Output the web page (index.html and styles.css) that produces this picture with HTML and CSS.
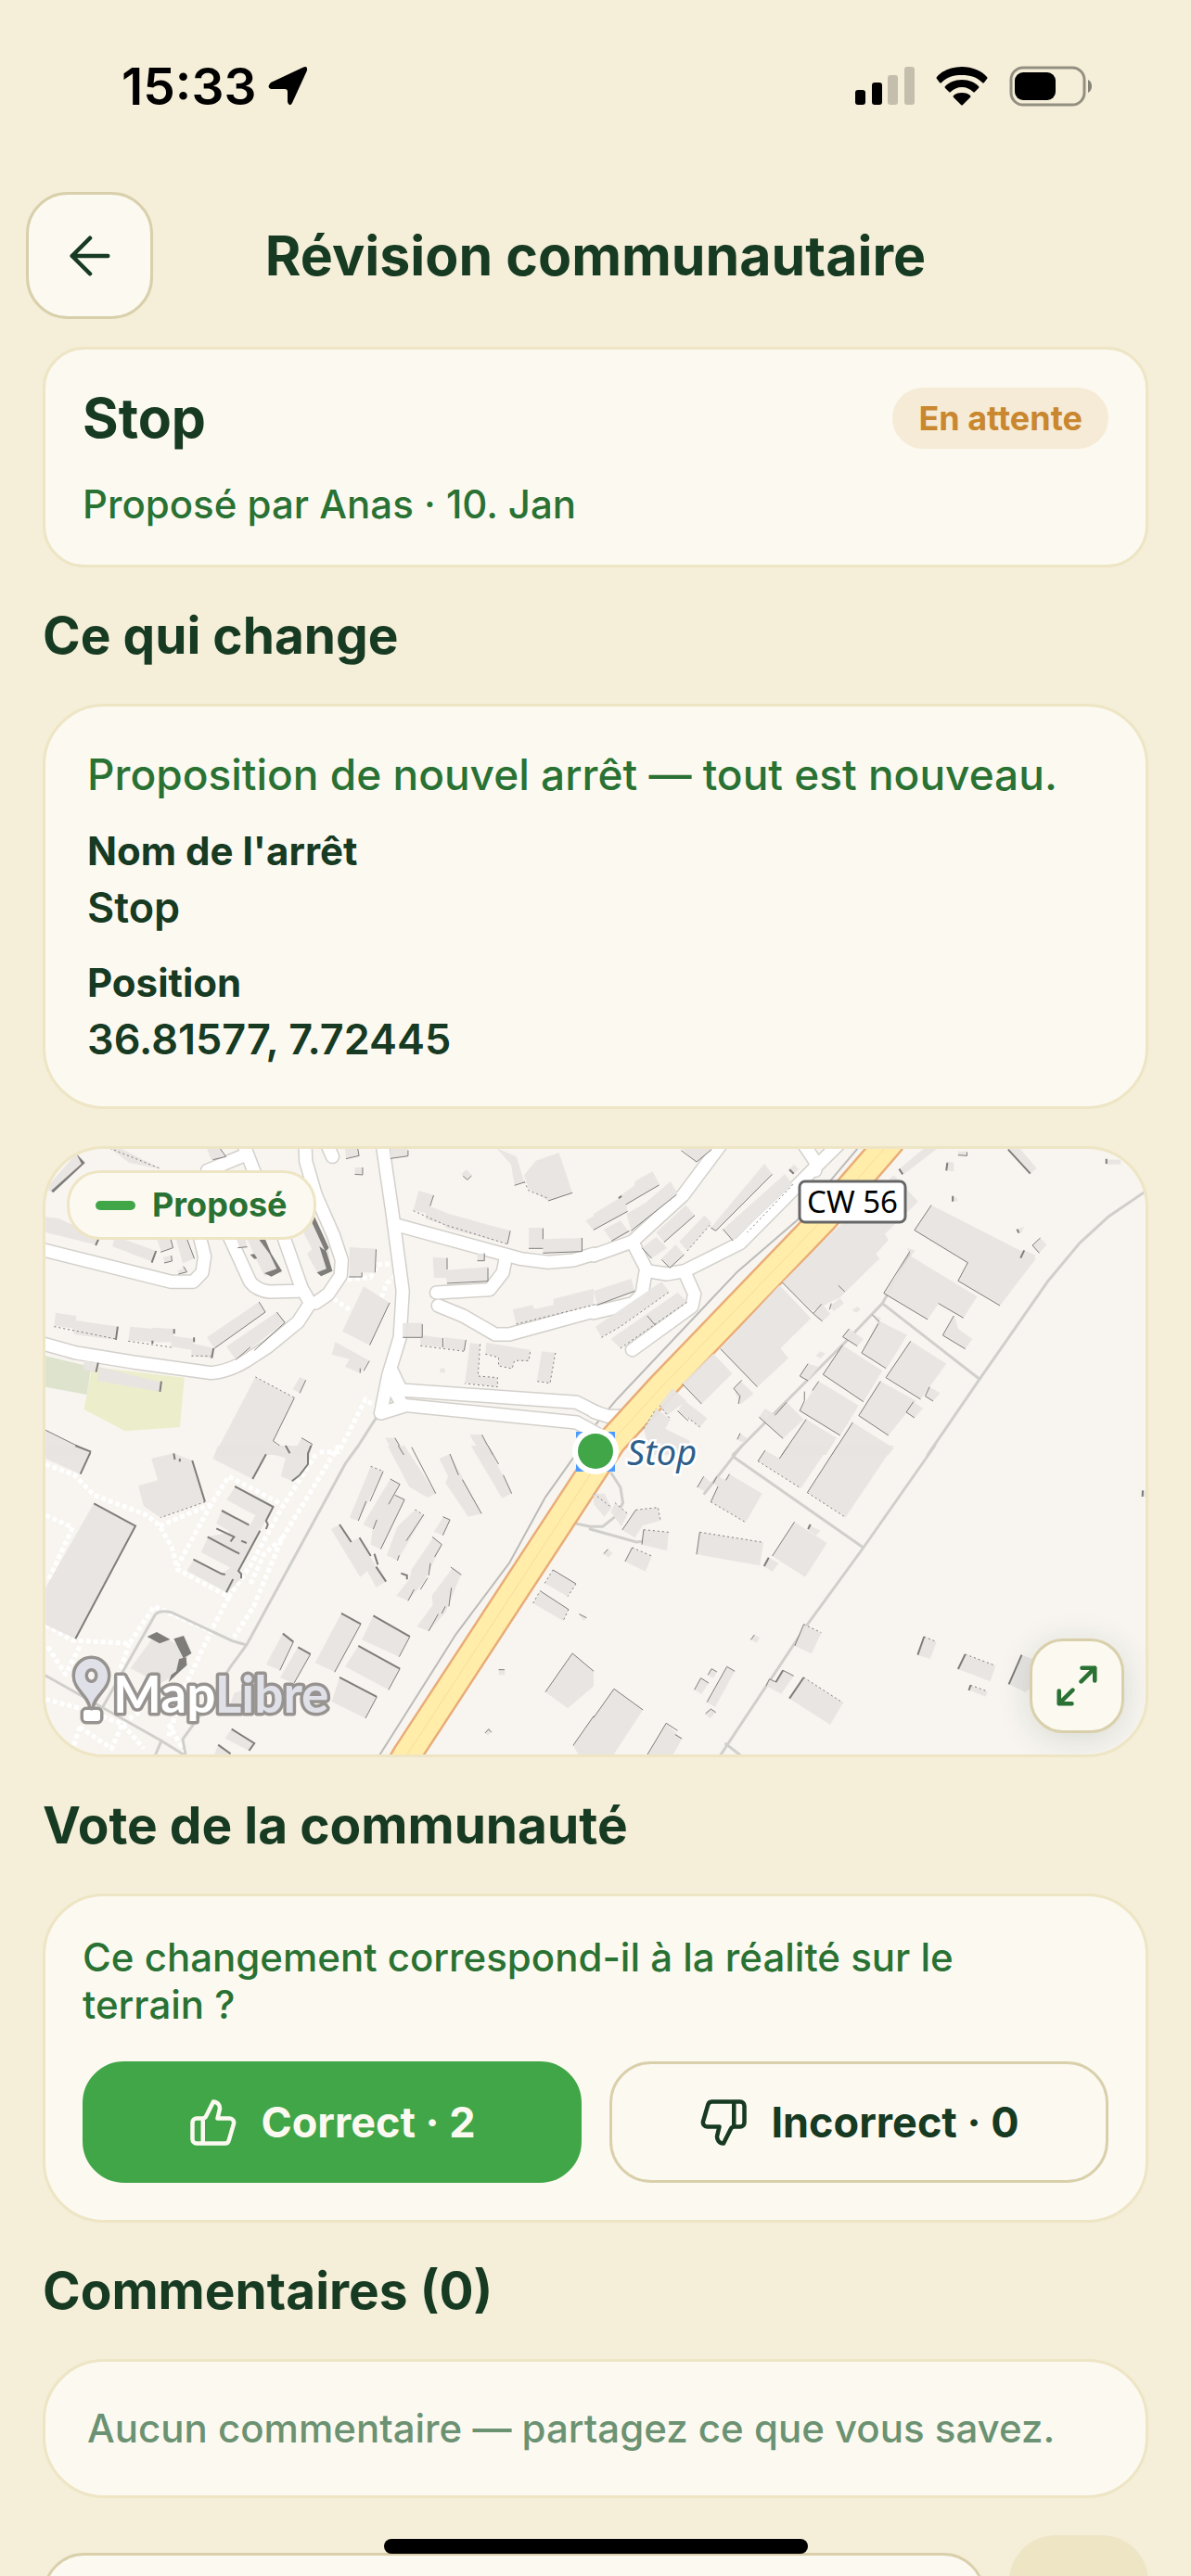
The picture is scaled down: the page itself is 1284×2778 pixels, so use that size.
FILE: index.html
```html
<!DOCTYPE html>
<html lang="fr">
<head>
    <meta charset="UTF-8">
    <meta name="viewport" content="width=device-width, initial-scale=1.0">
    <title>Révision communautaire</title>
    <link rel="stylesheet" href="styles.css">
</head>
<body>
    <div class="status-bar">
        <div class="status-time">
            <span>15:33</span>
            <svg width="44" height="44" viewBox="0 0 44 44"><path d="M38 2Q44 -1 43 5L27 40Q24 45 22 39V28Q22 25 19 25H4Q-1 23 4 18z"/></svg>
        </div>
        <div class="status-icons">
            <svg width="64" height="42" viewBox="0 0 64 42">
                <rect x="0" y="25" width="11" height="16" rx="3"/>
                <rect x="18" y="17" width="11" height="24" rx="3"/>
                <rect class="dim" x="35" y="9" width="11" height="32" rx="3"/>
                <rect class="dim" x="53" y="0" width="11" height="41" rx="3"/>
            </svg>
            <svg width="56" height="42" viewBox="0 0 56 42">
                <path d="M28 0C17 0 7 4 1 11Q0 12 1 13L4 17Q5 18 6 17C12 11 19 9 28 9S44 11 50 17Q51 18 52 17L55 13Q56 12 55 11C49 4 39 0 28 0z"/>
                <path d="M28 14C20 14 14 17 10 21Q9 22 10 23L14 27Q15 28 16 27C19 24 23 22 28 22S37 24 40 27Q41 28 42 27L46 23Q47 22 46 21C42 17 36 14 28 14z"/>
                <path d="M28 28C24 28 21 29 19 31Q18 32 19 33L27 41Q28 42 29 41L37 33Q38 32 37 31C35 29 32 28 28 28z"/>
            </svg>
            <svg width="90" height="44" viewBox="0 0 90 44">
                <rect class="battery-shell" x="2" y="2" width="79" height="40" rx="13"/>
                <rect x="6" y="7" width="44" height="30" rx="9"/>
                <path class="battery-tip" d="M85 15Q89 17 89 22T85 29z"/>
            </svg>
        </div>
    </div>

    <header class="header">
        <button class="back-btn" type="button" aria-label="Retour">
            <svg width="44" height="44" viewBox="0 0 48 48"><path d="M45 24H3M24 3L3 24l21 21"/></svg>
        </button>
        <h1>Révision communautaire</h1>
    </header>

    <main class="content">
        <section class="card summary">
            <div class="summary-top">
                <h2 class="summary-title">Stop</h2>
                <span class="badge">En attente</span>
            </div>
            <p class="note">Proposé par Anas · 10. Jan</p>
        </section>

        <h2 class="section-title">Ce qui change</h2>
        <section class="card card-round changes">
            <p class="changes-intro">Proposition de nouvel arrêt — tout est nouveau.</p>
            <dl class="fields">
                <div class="field">
                    <dt>Nom de l'arrêt</dt>
                    <dd>Stop</dd>
                </div>
                <div class="field">
                    <dt>Position</dt>
                    <dd>36.81577, 7.72445</dd>
                </div>
            </dl>
        </section>

        <section class="map-card">
            <svg class="map" viewBox="0 0 1186 653" preserveAspectRatio="xMidYMid slice" role="img" aria-label="Carte de l'arrêt">
                <defs>
                    <g id="streets">
                        <path transform="translate(-9 -10) scale(.3827 .3333)" d="M0 352L378 460H440L465 430L472 378L455 300L480 100L585 50M580 10L610 100L690 300L745 480L765 520M540 310L600 460Q620 488 655 492L735 490M755 10L757 70L785 180L835 310L858 390L855 440L820 500L785 528H770L735 590L650 670L590 715Q540 750 490 755L270 720L110 690L0 655M815 10L832 55M972 10L1000 230L1030 490L1022 640L990 760L968 885L1040 860L1520 915L1575 950M1000 750L1025 810L1520 850L1580 885M1005 810L1030 860M1010 275L1360 385L1440 397L1510 390L1568 370M1320 385L1312 430L1275 485L1125 495M1130 537L1200 570L1290 630H1330L1568 555"/>
                        <path transform="translate(591 -10) scale(.3852 .3333)" d="M360 10L250 180L108 330L0 375M108 330L150 425L205 435L255 425L410 335L560 160L620 90L690 10M585 10L620 70V100M145 430L135 500L110 530L0 560M255 430L282 500L275 540L108 680M0 880L40 895H80"/>
                    </g>
                    <g id="main-road">
                        <path d="M910 -7L839 75L664 257L611 315L588 350L390 653L377 675"/>
                    </g>
                </defs>
                <rect class="land" width="1186" height="653"/>

                <!-- parks -->
                <g transform="translate(-9 -10) scale(.3827 .3333)">
                    <path class="park" d="M24 700L152 735L140 825L24 800z"/>
                    <path class="grass" d="M155 735L415 770L402 930L248 943L132 873z"/>
                </g>

                <!-- footpaths -->
                <g class="footpath">
                    <path transform="translate(-9 -10) scale(.3827 .3333)" d="M875 452L940 445L960 405L1010 400M1010 440L985 465L970 510M835 515L880 550M960 870L925 840L850 1010H790"/>
                    <path transform="translate(-9 320) scale(.3827 .3333)" d="M24 60L105 95L160 160L310 225L345 260L380 330L395 400L540 490L600 390L690 200L790 20M24 225L100 265L30 440M345 260L490 190L540 100L690 190M490 190L395 390M850 0L690 300L610 520L555 620M690 300L640 350L600 450M24 580L100 630L260 640L330 520L490 600L420 770L370 940M260 640L220 770M540 490L490 600M120 650L80 740L30 650M24 820L120 850L240 900L300 980M120 910L210 980L240 900L290 860M120 910L95 1000M370 900L415 990"/>
                </g>

                <!-- tracks and minor roads -->
                <g class="minor">
                    <path transform="translate(591 -10) scale(.3852 .3333)" d="M1560 155L1440 250L1360 335L1270 460L1080 775L935 1020M808 530L1080 775M885 370L808 530L700 660L390 1020"/>
                    <path transform="translate(-9 320) scale(.3827 .3333)" d="M955 -90L905 0L870 55L590 645L545 715L480 840L410 950L420 1010M590 645L550 632L380 540Q345 530 332 548L185 845M10 735L350 955L420 1005M350 955L330 1010"/>
                    <path transform="translate(591 320) scale(.3852 .3333)" d="M955 0L755 330L585 600L350 1010M390 35L755 330M415 0L310 155M370 965L420 1010M50 90L75 135L82 185L60 230L25 262H-10L-60 250M-10 270L120 312L160 307"/>
                </g>
                <g class="rail">
                    <path transform="translate(591 -10) scale(.3852 .3333)" d="M745 20L570 260L400 430L65 840L0 930"/>
                    <path transform="translate(-9 320) scale(.3827 .3333)" d="M1510 40L1430 170L1330 380L1180 610L960 1010"/>
                </g>

                <use class="street-casing" href="#streets"/>
                <use class="street-fill" href="#streets"/>
                <use class="road-casing" href="#main-road"/>
                <use class="road-fill" href="#main-road"/>
                <use class="road-center" href="#main-road"/>

                <!-- buildings, north-west -->
                <g transform="translate(-9 -10) scale(.3827 .3333)">
                    <path class="building" d="M24 160L110 45L135 75L45 172zM205 28H235L350 95L260 75zM478 28H515L532 55L490 65zM24 250L60 255L175 315L165 340L24 300zM220 312L335 360L325 395L212 345zM335 315H375L383 350L350 362zM390 315H420L443 385L410 400zM355 380L378 375L380 395L360 400zM395 425L418 412L422 430L405 437zM560 315H585L592 348L570 350zM590 315H625L690 430L640 440L610 370zM770 260L820 350L830 425L790 430L760 370L775 355L750 300zM880 348L955 353L952 430H915V445H880zM920 475L993 528L937 665L860 620zM840 655L935 715L910 755L868 735L880 710L830 695zM52 560L110 570V585L230 605L222 648L105 630L100 610L48 603zM262 605L325 612V608L388 613L383 635L443 645L440 660L498 675L492 707L435 698V680L378 670V655H322L257 650zM625 525L643 558L500 675L478 640zM675 558L698 590L560 712L533 670zM175 735L350 785L345 815L170 780zM132 715L172 722L165 752L130 745zM615 768L725 835L665 975L700 1020H500zM740 768L757 778L740 820L720 808zM1075 165L1117 180L1105 215L1160 240L1270 275L1333 295L1325 338L1150 285L1148 275L1095 258V238L1060 228zM1385 285H1425V322L1535 318V362L1425 367V352H1385zM1115 380L1155 383V422L1270 412V458L1155 465L1152 447H1118zM1240 368h22v24h-22zM1295 28L1350 55L1372 135L1345 148L1335 80zM1405 68L1470 42L1508 172L1440 198L1385 160L1372 115zM868 28H903L907 52L870 62zM895 90h22v22h-22zM995 28H1045V53L995 61zM1195 112L1209 97L1224 115L1212 130zM1545 262L1568 248V295zM1030 593H1085V640H1030zM1080 632L1143 642V672L1080 665zM1148 640L1208 648L1203 683L1145 675zM1220 657L1248 662L1242 765L1297 770V800L1205 787zM1265 657L1390 680L1385 718L1345 713L1338 740L1300 730V705L1263 692zM1422 685L1460 690L1445 788L1408 780zM1340 550L1395 535L1402 548L1455 535V515L1568 482V535L1465 565L1350 597zM1135 740h14v14h-14zM24 940L150 1010V1020H24zM745 965L775 985L760 1020H720zM1218 955H1253L1283 1020H1253zM980 965H1008L1036 1020H1010z"/>
                    <path class="shade-solid" d="M110 45L135 75L45 172L40 165L125 78zM620 315H640L660 370L690 425L660 443L640 432L675 418L655 370zM780 245L822 350L812 362L775 270zM795 345L815 362L832 425L800 442L788 430L815 418zM600 372L612 370L620 384L612 386z"/>
                    <path class="shade-heavy" d="M175 317L165 342M335 360L323 398M227 605L222 648M497 675L492 707M350 782L346 816M172 722L166 752M386 613V628M442 640V655M325 650V660"/>
                    <path class="shade" d="M515 28L532 55L495 65M375 315L383 350L348 364M420 315L443 385M378 375L380 393L358 399M412 410L422 428L398 435M592 347L565 350M955 355L952 430M878 444H915V430M993 528L937 665M936 716L920 748M910 740V755M625 525L643 558L500 675M675 558L698 592L612 682M600 672L560 712M725 835L665 975L695 1000M757 778L740 820M903 28L907 52L870 62M917 90V114L895 112M1045 35V53L995 61M1224 117L1212 130L1200 118M1117 180L1107 215M1333 295L1325 338M1425 287V322M1535 318V362L1425 367M1425 352H1385M1155 383V420M1270 415V458L1155 465M1260 368V392H1240M1085 597V640H1030M1143 642V672M1208 648L1203 683M1345 148L1372 138M1508 172L1440 198M24 940L150 1012M745 965L775 985L760 1020M1253 955L1283 1020M1008 965L1036 1020"/>
                    <path class="shade-dots" d="M205 28L350 95M48 605L222 645M257 652L378 672M435 700H490M615 768L725 835M1060 230L1148 275L1325 338M1080 667L1205 685M1248 662L1242 765L1297 770V800L1205 789M1263 694L1300 705V732L1338 741L1345 715H1385L1390 680M1460 690L1445 788L1408 782M1350 597L1568 535M1372 135L1385 165L1440 190"/>
                </g>

                <!-- buildings, north-east -->
                <g transform="translate(591 -10) scale(.3852 .3333)">
                    <path class="building" d="M0 240L85 180L95 232L0 292zM70 185L115 148V135L165 103L185 147L90 210zM92 240L145 205L215 135L235 175L105 295zM28 290L75 262L100 300L50 328zM245 28H335L288 72zM478 78L500 112L342 295L328 285zM535 112L558 145L390 327L362 290zM175 300L258 212L283 245L197 332zM135 350L175 315L205 350L162 384zM310 245L330 270L262 360L240 330zM190 385L230 340L253 372L213 415zM0 490L105 450L115 490L10 535zM5 605L190 460L212 492L75 605L22 640zM48 645L235 495L262 525L75 675zM545 100L560 80L575 95L558 112zM700 265L840 115L908 200L815 305L825 325L790 370L800 385L690 510L610 555L528 462zM520 470L608 578L523 675L545 707L458 800L355 677zM335 692L388 757L302 855L248 790zM220 805L260 845L205 892L183 860zM255 845L318 902L297 930L235 878zM175 870L215 905L200 935L270 975L255 1020H160L140 935zM855 95L925 28H963L868 112zM945 212L1238 385L1137 537L1020 457L1047 398L898 293zM885 375L1073 508L1035 577L965 530L935 582L812 497zM877 352L900 358L888 378zM1010 570L1020 612L1060 645L1040 677L977 633zM1205 358L1238 375L1215 405L1193 385zM1228 342L1250 318L1268 340L1247 367zM1160 28H1192L1240 92L1222 110zM1435 65H1475V80H1435zM1020 38H1045V52H1020zM988 70L1008 75V103L987 100zM1005 182L1018 190V200L1005 198zM1185 290L1205 282L1195 305zM797 585L877 632L820 740L750 690zM780 565L805 578L795 592zM887 652L987 725L915 840L820 768zM697 665L808 748L755 848L642 760zM803 782L903 845L825 957L742 893zM630 782L742 860L690 957L577 877zM540 850L588 905L530 967L463 898L480 870L510 892zM595 905L680 965L650 1020H527zM725 915L840 998L825 1020H667zM895 848L922 870L898 900L875 882zM940 800L970 820L950 846L928 830zM715 612L755 645L738 668L697 638zM600 725L630 735L600 780L577 765zM410 780L448 822L410 857L392 805zM640 530L662 565L640 588L615 565zM690 512L700 530L672 555L660 540zM738 540L747 550L735 560L723 552zM635 685L648 692L635 708L622 700zM410 950L428 965L420 982L402 970z"/>
                    <path class="shade-heavy" d="M855 95L865 112M1160 32L1222 110M1435 62V78M990 75L987 100M1205 358L1195 383M1185 290L1190 302M1005 182V200M548 97L560 110M78 182L70 190"/>
                    <path class="shade" d="M0 292L95 232M183 147L90 210M232 178L105 295M100 295L50 328M245 35L288 72L330 32M500 112L342 295L328 285M390 327L362 290M283 245L197 332M162 384L135 350M253 372L213 415L190 388M115 490L10 535M150 570L172 600M528 462L610 558L640 588M355 677L458 800M248 790L302 855M235 878L265 910M945 212L898 293L1047 398L1020 457L1137 537M885 362L812 497L935 582M965 530L1035 577M1008 570L977 633L1040 677M1250 318L1228 342L1247 367M797 595L750 690L818 740M780 567L800 590M887 652L818 770L915 840M697 665L642 760L755 848M803 782L742 893L825 957M630 782L612 812M590 815V845L577 877L690 957M540 850L508 892M463 898L530 967M595 905L527 1020M725 915L667 1020M895 848L875 882L898 900M940 800L928 830L950 846M715 612L697 638L738 668M600 725L577 765L600 780M415 778L392 805L410 830L405 855M665 530L660 550M685 472L703 492M638 532L615 562M1045 40V52L1020 50M410 950L402 970"/>
                    <path class="shade-dots" d="M262 360L330 270M22 640L75 605L212 492M75 675L262 525M297 930L265 900M185 860L215 905M140 935L175 870M558 145L430 300"/>
                </g>

                <!-- buildings, south-west -->
                <g transform="translate(-9 320) scale(.3827 .3333)">
                    <path class="building" d="M24 0H108L152 22L122 92L24 42zM322 42L385 25L437 48L473 182L348 233L300 195L285 130L340 112zM510 0H640L648 25L607 108L495 42zM655 0H772L765 60L718 115L687 98L700 40L660 28zM160 187L277 260L108 625L24 580V460zM560 132L665 198L628 275L570 405L575 430L535 475L422 405L442 368L520 415L545 395L462 345L482 295L545 280L505 252L520 210L600 258L615 225L533 175zM335 608L433 665L400 735L345 770L263 720zM940 67L975 83L905 243L880 233zM995 108L1022 125L1005 160L1035 175L968 335L940 320L945 270L918 255zM1065 207L1090 225L1015 372L985 355L1015 262zM1145 230L1163 240L1143 290L1118 278zM1118 295L1140 320L1090 440L1045 502L1012 485L1050 430L1055 400zM1172 393L1195 415L1150 540L1103 600L1070 585L1115 515L1112 485zM852 255L828 270L910 425L930 405L955 458L983 440L905 300L885 310zM987 0H1035L1123 155L1100 168L1048 133zM1163 27L1133 42L1158 100L1150 120L1215 230L1252 220zM1222 0H1270L1337 155L1310 170zM857 543L912 577L840 733L783 703zM947 550L1050 618L1020 683L915 628zM905 648L1022 722L990 790L868 715zM852 750L957 813L925 882L830 828zM692 608L722 635L685 727L645 708zM735 652L770 675L723 770L685 750zM548 915L612 963L597 987L530 947zM510 968L545 998H500zM1453 402L1518 447L1495 488L1430 445zM1417 470L1497 530L1482 567L1397 510zM1508 672L1568 730V778L1495 850L1432 797zM1568 875V1010H1530L1510 970zM1527 545L1548 557L1540 567zM1302 722L1318 728V742H1300zM1272 915L1280 925L1270 938L1262 928zM585 790L600 820L540 850L555 800z"/>
                    <path class="shade-solid" d="M310 618L337 603L375 627L345 640zM385 625L413 615L435 672L412 688zM400 690L420 685L422 710L398 735L370 766L378 742L392 730z"/>
                    <path class="shade-heavy" d="M150 22L122 92M385 25L388 45M402 42V52M437 48L473 182M645 28L607 108M160 187L277 260L108 625M557 132L665 198L645 243L650 255L645 270M520 210L597 257M505 268L555 295L545 310M480 295L570 350M628 275L567 405L575 415V430M440 368L520 415L530 417M552 432L533 475M548 917L612 963L597 987M510 968L545 997M857 543L912 577M947 550L1050 618M905 648L1022 722M852 750L957 813M692 608L722 635M735 652L770 675M772 0L763 25V60L740 95L718 115M852 255L885 312M908 298L940 357M950 350L960 385M955 392L983 440M1025 413L1042 420V433M108 0L152 20M700 0L712 25M575 308L590 315"/>
                    <path class="shade" d="M912 577L838 733M1050 618L1020 683M1022 722L990 790M957 813L925 882M722 635L684 727M770 675L723 770M975 83L938 180M927 180L905 243M995 108L1022 125L990 190M1008 160L1035 175L968 335M957 240L947 270M1088 225L1040 308M1020 355L1015 372M1143 230L1163 240L1143 290M1113 295L1140 320L1120 360M1108 380L1103 420M1100 428L1080 465M1062 465L1045 502M1165 393L1195 418M1167 460L1160 520M1150 520L1140 543M1130 545L1103 600M1017 0L1033 30M1055 5L1123 155M1163 27L1187 95M1198 110L1252 220M1270 0L1300 60M1313 95L1337 155M1453 402L1518 447M1417 470L1497 530M1508 672L1432 797M1508 672L1568 730M1568 875L1510 970M1527 545L1548 557M1300 725H1317M1262 930L1272 917L1280 928"/>
                    <path class="shade-dots" d="M473 182L348 233M940 67L975 83M1065 207L1090 225M1518 447L1495 488M1497 530L1482 567M1430 445L1453 402M1397 510L1417 470"/>
                </g>

                <!-- buildings, south-east -->
                <g transform="translate(591 320) scale(.3852 .3333)">
                    <path class="building" d="M480 15L520 42L545 0H660L580 138L460 50zM683 0H840L705 232L598 152zM380 92L472 155L425 248L328 182L348 132L335 122L348 100L370 112zM310 100L328 120L310 148L290 135zM562 247L653 315L592 425L500 357zM600 255L635 275L622 290L600 272zM490 362L518 380L500 408L477 390zM297 280L475 313L465 388L288 352zM118 208L180 200L187 242L138 258L115 298L80 273zM140 272L210 280L205 340L135 320zM108 330L163 357L145 407L88 375zM0 155L30 155L50 200L30 230L0 190zM60 185L95 220L78 262L48 215zM40 335L53 348L42 362L28 350zM588 578L637 605L610 673L563 648zM450 612L465 622L457 638L440 628zM373 715L395 730L340 845L317 830zM330 722L345 732L335 752L320 742zM300 752L322 768L302 803L282 790zM328 852L342 863L325 883L313 867zM530 727L560 745L525 803L483 777L492 752L512 765zM588 750L698 832L662 903L548 818zM57 787L138 855L50 1010H0V880zM203 898L247 948L218 1010H145zM927 618L960 635L942 690L907 678zM1040 675L1125 712L1110 763L1020 723zM1055 775L1102 795L1097 812L1050 790zM1198 677L1228 690V780L1208 797L1162 772zM1533 145H1545V165H1533z"/>
                    <path class="shade-heavy" d="M925 618L907 677M1040 675L1020 723M1055 775L1050 792M1198 677L1162 772M588 750L548 818M607 255L600 270M490 362L477 390M1537 145L1536 165M1545 885L1525 945M510 765L530 727"/>
                    <path class="shade" d="M480 15L460 50M545 0L520 42M683 0L598 152M380 92L370 112M348 132L328 182M308 100L290 135M345 100L335 122M562 247L500 357M297 280L288 352M118 208L80 273M140 272L135 320M108 330L88 375M40 335L28 350M588 578L563 648M450 612L440 628M395 730L373 715L317 830M345 732L330 722L320 742M322 768L300 752L282 790M342 863L328 852L313 867M530 727L560 745M483 777L492 755L510 765M57 787L138 855M57 787L0 880M203 898L145 1010M203 898L235 922M228 935L247 948"/>
                    <path class="shade-dots" d="M460 50L580 138M598 152L705 232M328 182L425 248M297 280L475 313M118 208L180 200L187 242M140 272L210 280M108 330L163 357M588 578L637 605M588 750L698 832M925 618L960 635M1040 675L1125 712M1055 775L1102 795M0 155L50 200M60 185L95 220"/>
                </g>

                <!-- road shield -->
                <rect class="shield" x="813" y="35" width="114" height="44" rx="6"/>
                <text class="shield-text" x="870" y="69">CW 56</text>

                <!-- stop marker -->
                <rect class="stop-box" x="572" y="305" width="42" height="43"/>
                <circle class="stop-ring" cx="593" cy="326" r="25"/>
                <circle class="stop-dot" cx="593" cy="326" r="19"/>
                <text class="stop-label" x="627" y="341">Stop</text>

                <!-- map attribution -->
                <g class="brand-pin">
                    <rect x="41" y="605" width="18" height="12" rx="3"/>
                    <path fill-rule="evenodd" d="M49.500 602C47 588 32 582 32 568a17.500 18 0 0 1 35 0C67 582 52 588 49.500 602zM49.500 560a7 8 0 1 0 .1 0z"/>
                </g>
                <text class="brand" x="73" y="608">Map<tspan class="brand-end">Libre</tspan></text>
            </svg>
            <span class="legend"><span class="legend-line"></span>Proposé</span>
            <button class="expand-btn" type="button" aria-label="Agrandir la carte">
                <svg width="44" height="44" viewBox="0 0 48 48"><path d="M30 3h15v15M45 3L29 19M18 45H3V30M3 45l16-16"/></svg>
            </button>
        </section>

        <h2 class="section-title">Vote de la communauté</h2>
        <section class="card card-round vote">
            <p class="note">Ce changement correspond-il à la réalité sur le terrain&nbsp;?</p>
            <div class="vote-actions">
                <button class="vote-btn vote-yes" type="button">
                    <svg width="54" height="54" viewBox="0 0 24 24"><path d="M7 10v12M15 5.880L14 10h5.830a2 2 0 0 1 1.920 2.560l-2.330 8A2 2 0 0 1 17.500 22H4a2 2 0 0 1-2-2v-8a2 2 0 0 1 2-2h2.760a2 2 0 0 0 1.790-1.110L12 2a3.130 3.130 0 0 1 3 3.880z"/></svg>
                    Correct · 2
                </button>
                <button class="vote-btn vote-no" type="button">
                    <svg width="54" height="54" viewBox="0 0 24 24"><path d="M17 14V2M9 18.120L10 14H4.170a2 2 0 0 1-1.920-2.560l2.330-8A2 2 0 0 1 6.500 2H20a2 2 0 0 1 2 2v8a2 2 0 0 1-2 2h-2.760a2 2 0 0 0-1.790 1.110L12 22a3.130 3.130 0 0 1-3-3.880z"/></svg>
                    Incorrect · 0
                </button>
            </div>
        </section>

        <h2 class="section-title">Commentaires (0)</h2>
        <section class="card card-round empty">
            <p>Aucun commentaire — partagez ce que vous savez.</p>
        </section>

        <form class="composer">
            <input class="composer-input" type="text" aria-label="Votre commentaire">
            <button class="composer-send" type="button" aria-label="Envoyer"></button>
        </form>
    </main>

    <div class="home-indicator"></div>
</body>
</html>
```
FILE: styles.css
```css
* {
    margin: 0;
    padding: 0;
    box-sizing: border-box;
}

body {
    height: 100vh;
    overflow: hidden;
    font-family: Inter, "Liberation Sans", sans-serif;
    font-size: 42px;
    font-weight: 500;
    line-height: 51px;
    background: #f5eed8;
    color: #163a22;
}

button,
input {
    font-family: inherit;
    color: inherit;
}

/* Status bar */
.status-bar {
    display: flex;
    align-items: center;
    justify-content: space-between;
    height: 207px;
    padding: 0 106px 21px 131px;
}

.status-time {
    display: flex;
    align-items: center;
    gap: 12px;
    font-size: 55px;
    font-weight: 600;
    color: #000;
}

.status-icons {
    display: flex;
    align-items: center;
    gap: 23px;
}

.dim {
    opacity: 0.2;
}

.battery-shell {
    fill: none;
    stroke: #000;
    stroke-width: 3;
    opacity: 0.4;
}

.battery-tip {
    opacity: 0.45;
}

/* Header */
.header {
    display: grid;
    grid-template-columns: 137px 1fr 137px;
    align-items: center;
    padding: 0 28px;
}

.back-btn {
    display: flex;
    align-items: center;
    justify-content: center;
    height: 137px;
    background: #fcf9f1;
    border: 3px solid #d9d0ab;
    border-radius: 45px;
}

.back-btn path,
.expand-btn path {
    fill: none;
    stroke: currentColor;
    stroke-width: 5;
    stroke-linecap: round;
    stroke-linejoin: round;
}

h1 {
    font-size: 59px;
    font-weight: 700;
    line-height: 67px;
    text-align: center;
}

/* Content */
.content {
    display: flex;
    flex-direction: column;
    gap: 40px;
    padding: 30px 46px 0;
}

.section-title,
.summary-title {
    font-size: 55px;
    font-weight: 700;
    line-height: 67px;
}

.card {
    display: flex;
    flex-direction: column;
    padding: 40px;
    background: #fcf9f1;
    border: 3px solid #eee5c5;
    border-radius: 45px;
}

.card-round {
    border-radius: 66px;
}

.note {
    color: #297233;
}

.summary {
    gap: 34px;
}

.summary-top {
    display: flex;
    align-items: center;
    justify-content: space-between;
}

.summary-title {
    font-size: 59px;
}

.badge {
    padding: 8px 28px;
    font-size: 36px;
    font-weight: 700;
    line-height: 50px;
    color: #c9872f;
    background: #f6ebd6;
    border-radius: 33px;
}

.changes {
    gap: 28px;
    padding: 45px;
}

.changes-intro {
    font-size: 46px;
    line-height: 57px;
    color: #297233;
}

.fields {
    display: flex;
    flex-direction: column;
    gap: 28px;
}

.field {
    display: flex;
    flex-direction: column;
    gap: 9px;
}

.field dt {
    font-weight: 700;
}

.field dd {
    font-size: 45px;
    font-weight: 600;
    line-height: 54px;
}

/* Map */
.map-card {
    position: relative;
    overflow: hidden;
    border: 3px solid #eee5c5;
    border-radius: 66px;
}

.map {
    display: block;
    width: 100%;
}

.map path {
    vector-effect: non-scaling-stroke;
}

.land {
    fill: #f8f5f0;
}

.park {
    fill: #dde3cd;
}

.grass {
    fill: #ecedcb;
}

.building {
    fill: #e7e4e1;
    fill-opacity: 0.95;
}

.shade,
.shade-heavy,
.shade-dots {
    fill: none;
    stroke: #7f7d7a;
    stroke-width: 1;
}

.shade-heavy {
    stroke-width: 2;
}

.shade-dots {
    stroke-dasharray: 2 3;
}

.shade-solid {
    fill: #7f7d7a;
}

.footpath,
.minor,
.rail,
.street-casing,
.street-fill,
.road-casing,
.road-fill,
.road-center {
    fill: none;
    stroke-linecap: round;
    stroke-linejoin: round;
}

.footpath {
    stroke: #fff;
    stroke-width: 5;
    stroke-linecap: butt;
    stroke-dasharray: 5 3;
}

.minor {
    stroke: #d0cfcc;
    stroke-width: 3;
}

.rail {
    stroke: #bcbbb9;
    stroke-width: 2;
}

.street-casing {
    stroke: #d3d0cb;
    stroke-width: 16;
}

.street-fill {
    stroke: #fff;
    stroke-width: 13;
}

.road-casing {
    stroke: #e9ac77;
    stroke-width: 33;
}

.road-fill {
    stroke: #ffeda9;
    stroke-width: 28;
}

.road-center {
    stroke: #f8dc9c;
    stroke-width: 1;
}

.shield {
    fill: #fff;
    stroke: #666;
    stroke-width: 3;
}

.shield-text {
    font-family: "Noto Sans", sans-serif;
    font-size: 33px;
    font-weight: 400;
    text-anchor: middle;
}

.stop-box {
    fill: #4d9bff;
}

.stop-ring {
    fill: #fff;
}

.stop-dot {
    fill: #41a648;
}

.stop-label {
    font-family: "Noto Sans", sans-serif;
    font-size: 38px;
    font-style: italic;
    font-weight: 400;
    fill: #2e5f8a;
    stroke: #fff;
    stroke-width: 5;
    paint-order: stroke;
}

.brand,
.brand-pin {
    fill: #fff;
    stroke: #979390;
    stroke-width: 7;
    stroke-linejoin: round;
    paint-order: stroke;
}

.brand {
    font-family: Lato, sans-serif;
    font-size: 55px;
    font-weight: 700;
}

.brand-end,
.brand-pin path {
    fill: #e0e1e8;
}

.legend {
    position: absolute;
    top: 23px;
    left: 23px;
    display: flex;
    align-items: center;
    gap: 18px;
    padding: 9px 28px;
    font-size: 36px;
    font-weight: 700;
    color: #297233;
    background: #fcf9f1;
    border: 3px solid #eee5c5;
    border-radius: 36px;
}

.legend-line {
    width: 43px;
    height: 10px;
    background: #41a648;
    border-radius: 5px;
}

.expand-btn {
    position: absolute;
    right: 23px;
    bottom: 23px;
    display: flex;
    align-items: center;
    justify-content: center;
    width: 102px;
    height: 102px;
    color: #297233;
    background: #fcf9f1;
    border: 3px solid #d9d0ab;
    border-radius: 36px;
    box-shadow: 0 6px 36px rgba(22, 58, 34, 0.14);
}

/* Vote */
.vote {
    gap: 36px;
}

.vote-actions {
    display: grid;
    grid-template-columns: 1fr 1fr;
    gap: 30px;
}

.vote-btn {
    display: flex;
    align-items: center;
    justify-content: center;
    gap: 24px;
    height: 131px;
    font-size: 45px;
    font-weight: 700;
    background: #fcf9f1;
    border: 3px solid #d9d0ab;
    border-radius: 45px;
}

.vote-btn path {
    fill: none;
    stroke: currentColor;
    stroke-width: 2;
    stroke-linecap: round;
    stroke-linejoin: round;
}

.vote-yes {
    color: #fcf9f1;
    background: #41a648;
    border-color: #41a648;
}

/* Comments */
.empty {
    padding: 45px;
    line-height: 54px;
    color: #6b9272;
}

.composer {
    display: flex;
    align-items: center;
    gap: 26px;
}

.composer-input {
    flex: 1;
    min-width: 0;
    height: 112px;
    padding: 0 40px;
    font-size: 42px;
    background: #fcf9f1;
    border: 3px solid #d9d0ab;
    border-radius: 45px;
}

.composer-send {
    width: 150px;
    height: 150px;
    background: #eee5c5;
    border: none;
    border-radius: 50px;
}

.home-indicator {
    position: fixed;
    bottom: 24px;
    left: 50%;
    width: 457px;
    height: 16px;
    margin-left: -228px;
    background: #000;
    border-radius: 8px;
}
```
